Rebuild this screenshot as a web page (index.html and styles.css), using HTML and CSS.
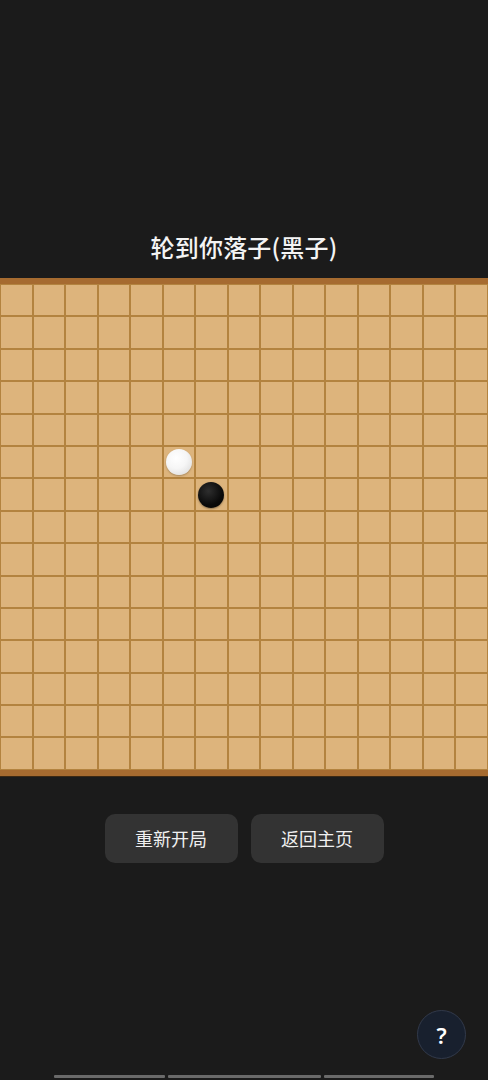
FILE: index.html
```html
<!DOCTYPE html>
<html lang="zh">
<head>
<meta charset="utf-8">
<title>五子棋</title>
<link rel="stylesheet" href="styles.css">
</head>
<body>
<main class="game">
  <h1 class="status">轮到你落子(黑子)</h1>
  <div class="board" id="board"></div>
  <div class="actions">
    <button class="btn">重新开局</button>
    <button class="btn">返回主页</button>
  </div>
</main>
<button class="help">?</button>
<div class="nav-bars">
  <span class="bar bar-a"></span>
  <span class="bar bar-b"></span>
  <span class="bar bar-c"></span>
</div>
<script src="app.js"></script>
</body>
</html>
```

FILE: styles.css
```css
* { box-sizing: border-box; }
html, body {
  margin: 0;
  padding: 0;
  background: #1b1b1b;
  font-family: "Noto Sans CJK SC", "Noto Sans", sans-serif;
  color: #f2f2f2;
}
.game {
  display: flex;
  flex-direction: column;
  align-items: center;
  padding-top: 232px;
}
.status {
  margin: 0 0 16px;
  font-size: 24px;
  line-height: 30px;
  font-weight: 500;
  color: #f4f4f4;
  letter-spacing: 0.2px;
}
.board {
  width: 488px;
  display: grid;
  grid-template-columns: repeat(15, 1fr);
  grid-template-rows: repeat(15, 32.4px);
  background: #dcb37b;
  border-top: 6px solid #a66b30;
  border-bottom: 6px solid #a66b30;
  box-shadow: 0 1px 0 #3b2814;
}
.cell {
  border: 1px solid #b3833f;
  background: #ddb47c;
  display: flex;
  align-items: center;
  justify-content: center;
}
.stone {
  width: 26px;
  height: 26px;
  border-radius: 50%;
}
.stone.white {
  background: radial-gradient(circle at 40% 35%, #ffffff 0%, #f6f6f6 45%, #d6d6d6 100%);
  box-shadow: 0 1px 2px rgba(0,0,0,0.25);
}
.stone.black {
  background: radial-gradient(circle at 40% 35%, #2e2e2e 0%, #0a0a0a 60%, #000 100%);
  box-shadow: 0 1px 2px rgba(0,0,0,0.35);
}
.actions {
  display: flex;
  gap: 13px;
  margin-top: 38px;
}
.btn {
  width: 133px;
  height: 49px;
  border: none;
  border-radius: 10px;
  background: #333333;
  color: #f0f0f0;
  font-family: "Noto Sans CJK SC", "Noto Sans", sans-serif;
  font-size: 18px;
  padding: 0;
}
.help {
  position: fixed;
  left: 417px;
  top: 1010px;
  width: 49px;
  height: 49px;
  border-radius: 50%;
  background: #18202e;
  border: 1px solid #323a4b;
  color: #ffffff;
  font-family: "Noto Sans", "DejaVu Sans", sans-serif;
  font-weight: 600;
  font-size: 22px;
  line-height: 1;
  padding: 0;
}
.nav-bars {
  position: fixed;
  left: 54px;
  top: 1075px;
  display: flex;
  gap: 3px;
}
.bar {
  height: 3px;
  background: #6a6a6a;
  border-radius: 1px;
}
.bar-a { width: 111px; }
.bar-b { width: 153px; }
.bar-c { width: 110px; }
```

FILE: app.js
```js
(function () {
  var board = document.getElementById('board');
  var stones = { '5,5': 'white', '6,6': 'black' };
  for (var r = 0; r < 15; r++) {
    for (var c = 0; c < 15; c++) {
      var cell = document.createElement('div');
      cell.className = 'cell';
      var s = stones[r + ',' + c];
      if (s) {
        var st = document.createElement('span');
        st.className = 'stone ' + s;
        cell.appendChild(st);
      }
      board.appendChild(cell);
    }
  }
})();
```
